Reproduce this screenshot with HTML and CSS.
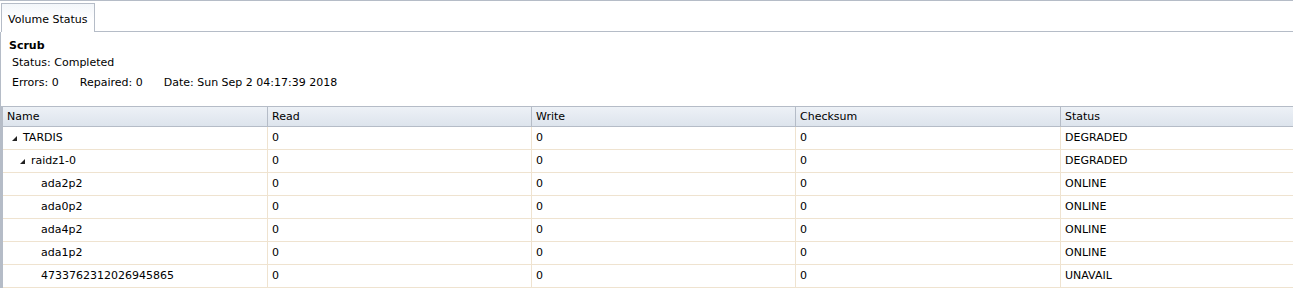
FILE: index.html
```html
<!DOCTYPE html>
<html>
<head>
<meta charset="utf-8">
<link rel="stylesheet" href="styles.css">
</head>
<body>
<div class="container">
  <div class="tabstrip">
    <div class="tab">Volume Status</div>
    <div class="tabfill"></div>
  </div>
  <div class="panel">
    <div class="scrub">
      <div class="scrub-title">Scrub</div>
      <div class="scrub-status">Status: Completed</div>
      <div class="scrub-stats">
        <span>Errors: 0</span>
        <span>Repaired: 0</span>
        <span>Date: Sun Sep 2 04:17:39 2018</span>
      </div>
    </div>
    <div class="grid">
      <div class="row head">
        <div class="cell">Name</div>
        <div class="cell">Read</div>
        <div class="cell">Write</div>
        <div class="cell">Checksum</div>
        <div class="cell">Status</div>
      </div>
      <div class="row">
        <div class="cell name l0"><span class="exp"></span>TARDIS</div>
        <div class="cell">0</div><div class="cell">0</div><div class="cell">0</div>
        <div class="cell">DEGRADED</div>
      </div>
      <div class="row">
        <div class="cell name l1"><span class="exp"></span>raidz1-0</div>
        <div class="cell">0</div><div class="cell">0</div><div class="cell">0</div>
        <div class="cell">DEGRADED</div>
      </div>
      <div class="row">
        <div class="cell name l2">ada2p2</div>
        <div class="cell">0</div><div class="cell">0</div><div class="cell">0</div>
        <div class="cell">ONLINE</div>
      </div>
      <div class="row">
        <div class="cell name l2">ada0p2</div>
        <div class="cell">0</div><div class="cell">0</div><div class="cell">0</div>
        <div class="cell">ONLINE</div>
      </div>
      <div class="row">
        <div class="cell name l2">ada4p2</div>
        <div class="cell">0</div><div class="cell">0</div><div class="cell">0</div>
        <div class="cell">ONLINE</div>
      </div>
      <div class="row">
        <div class="cell name l2">ada1p2</div>
        <div class="cell">0</div><div class="cell">0</div><div class="cell">0</div>
        <div class="cell">ONLINE</div>
      </div>
      <div class="row">
        <div class="cell name l2">4733762312026945865</div>
        <div class="cell">0</div><div class="cell">0</div><div class="cell">0</div>
        <div class="cell">UNAVAIL</div>
      </div>
    </div>
  </div>
</div>
</body>
</html>
```
FILE: styles.css
```css
html, body {
  margin: 0;
  padding: 0;
  background: #fff;
  overflow: hidden;
}
body {
  font-family: "DejaVu Sans", Verdana, sans-serif;
  font-size: 11px;
  color: #000;
}
.container {
  border-top: 1px solid #b5bcc7;
  width: 1293px;
  overflow: hidden;
}
.tabstrip {
  display: flex;
  padding-top: 2px;
  padding-left: 1px;
  height: 31px;
  box-sizing: border-box;
}
.tab {
  width: 94px;
  box-sizing: border-box;
  border: 1px solid #b5bcc7;
  border-bottom: none;
  background: linear-gradient(#f3f6fa, #fff 60%);
  padding: 9px 0 0 6px;
  height: 29px;
  color: #000;
}
.tabfill {
  flex: 1;
  border-bottom: 1px solid #b5bcc7;
}
.panel {
  border-left: 1px solid #b5bcc7;
  padding-top: 6px;
}
.scrub {
  padding-left: 8px;
  height: 68px;
}
.scrub-title {
  font-weight: bold;
  line-height: 15px;
}
.scrub-status {
  padding-left: 3px;
  line-height: 15px;
  margin-top: 2px;
}
.scrub-stats {
  display: flex;
  padding-left: 3px;
  margin-top: 5px;
  line-height: 15px;
}
.scrub-stats span {
  margin-right: 21px;
}
.grid {
  border-left: 2px solid #b5bcc7;
  border-top: 1px solid #b5bcc7;
  width: 1400px;
}
.row {
  display: grid;
  grid-template-columns: 264px 264px 264px 265px 340px;
  height: 23px;
  box-sizing: border-box;
  border-bottom: 1px solid #efe3d0;
}
.cell {
  padding-left: 4px;
  line-height: 22px;
  border-left: 1px solid #efe3d0;
  white-space: nowrap;
}
.cell:first-child {
  border-left: none;
  padding-left: 4px;
}
.row.head {
  height: 20px;
  background: linear-gradient(#edf1f6, #dde4ed);
  border-bottom: 1px solid #b5bcc7;
}
.row.head .cell {
  line-height: 19px;
  border-left-color: #b5bcc7;
}
.name.l0 { padding-left: 9px; }
.name.l1 { padding-left: 17px; }
.name.l2 { padding-left: 38px; }
.exp {
  display: inline-block;
  width: 0;
  height: 0;
  border-left: 5px solid transparent;
  border-bottom: 5px solid #222;
  margin-right: 6px;
  vertical-align: 0;
}
```
